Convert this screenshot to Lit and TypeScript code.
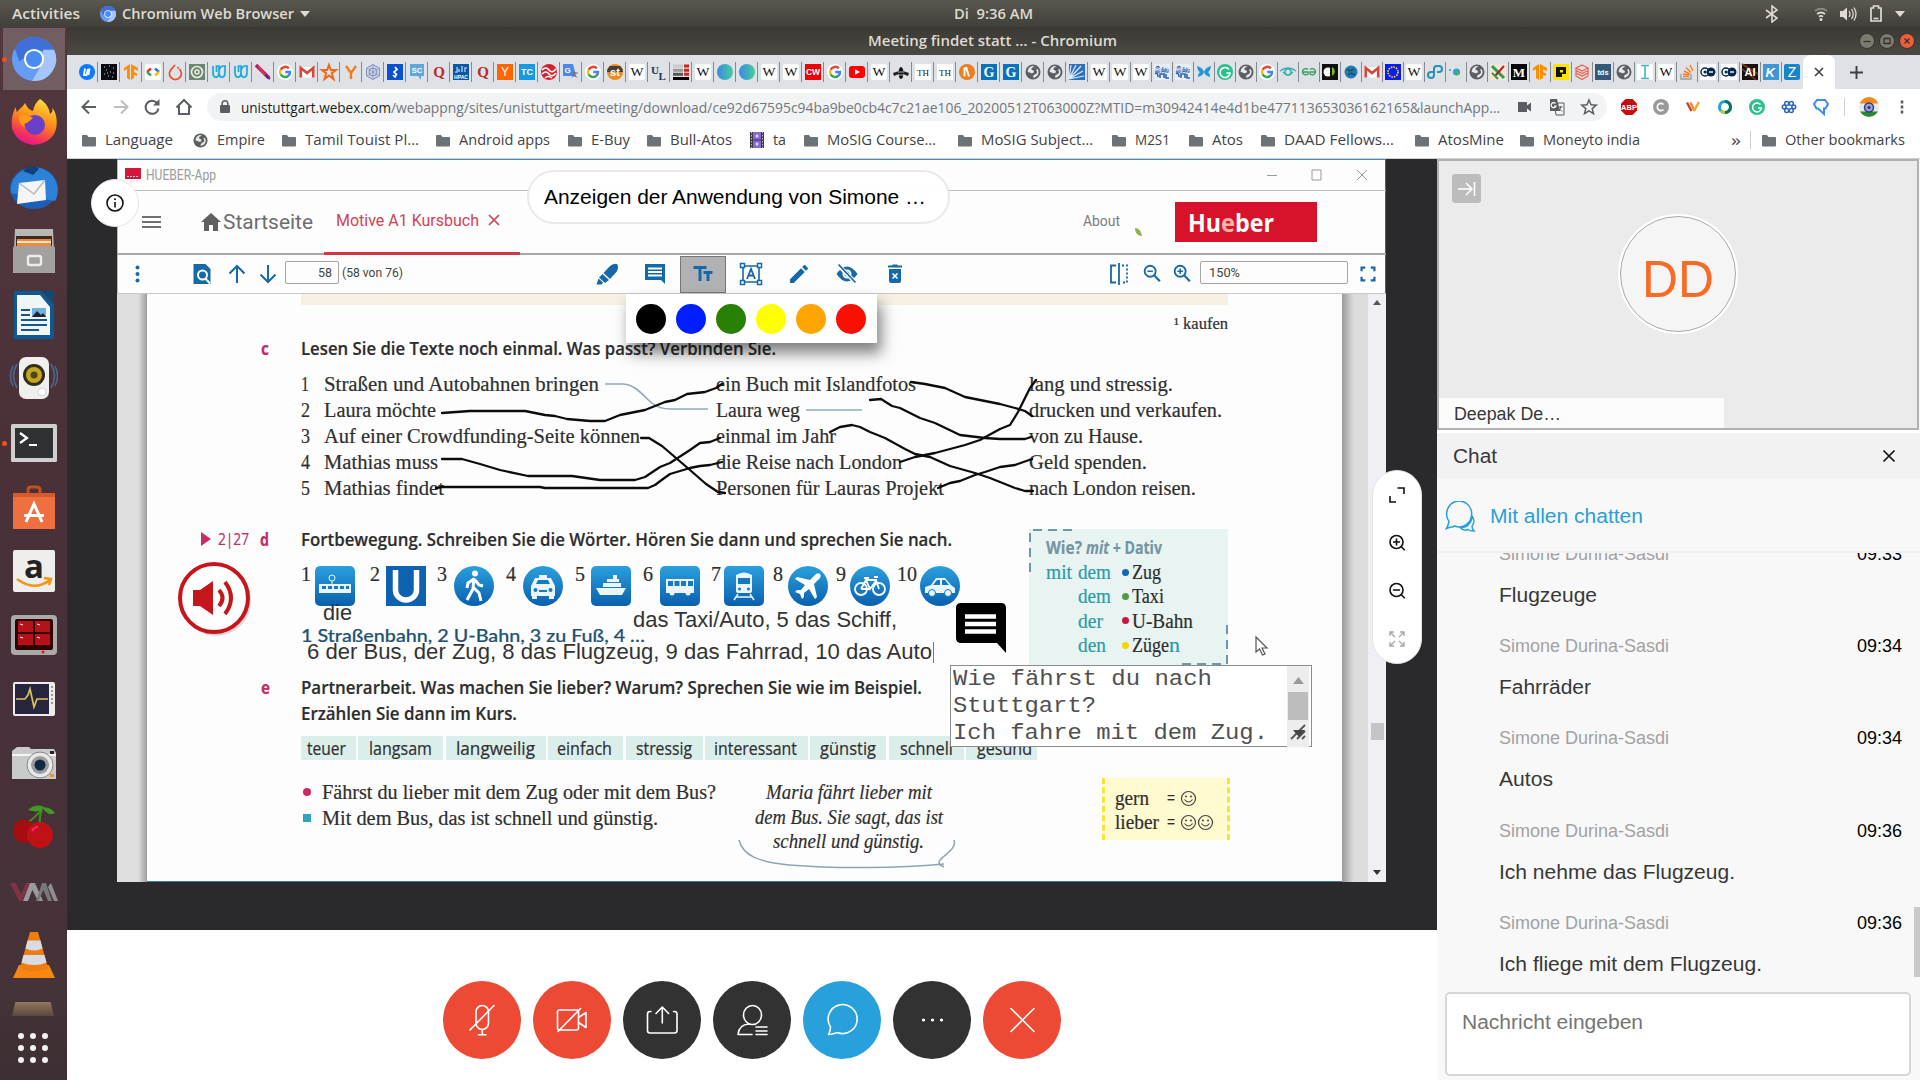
import { LitElement, html, svg, css } from "lit";
import { customElement, property } from "lit/decorators.js";

/* Text stretched horizontally to an exact width. */
@customElement("fit-text")
class FitText extends LitElement {
  @property({ type: Number }) w = 0;
  @property() text = "";
  static styles = css`
    :host { display: inline-block; flex: none; white-space: pre; }
    .in { display: inline-block; transform-origin: 0 50%; }
  `;
  updated() {
    const el = this.renderRoot.querySelector(".in") as HTMLElement;
    this.style.width = this.w + "px";
    el.style.transform = "none";
    const n = el.getBoundingClientRect().width;
    if (n) el.style.transform = `scaleX(${this.w / n})`;
  }
  render() { return html`<span class="in">${this.text}</span>`; }
}
void FitText;
const t = (text: string, w: number, cls = "") => html`<fit-text class=${cls} .w=${w} .text=${text}></fit-text>`;

const SANS = css`"Open Sans", "Noto Sans", sans-serif`;
const ARIAL = css`"Liberation Sans", Arial, sans-serif`;
const SERIF = css`"Liberation Serif", "Times New Roman", serif`;

/* ---------- shared glyphs ---------- */
const chromium = (s: number) => html`<svg width=${s} height=${s} viewBox="0 0 48 48">
  <circle cx="24" cy="24" r="24" fill="#659df5"/>
  <path d="M24 24L2.500 14A24 24 0 0 1 47 17.500L24 14z" fill="#3f6fd8"/>
  <path d="M24 0A24 24 0 0 1 46 14H24L8 27 3 12A24 24 0 0 1 24 0z" fill="#3f6fd8"/>
  <path d="M34 14h12A24 24 0 0 1 22 48L33 29z" fill="#a5c5fb"/>
  <circle cx="24" cy="24" r="11" fill="#fff"/><circle cx="24" cy="24" r="8.800" fill="#4a8af4"/></svg>`;

const globe = svg`<circle cx="8" cy="8" r="7.500" fill="#5b5f63"/><path d="M7 2C4 3 2.500 5.500 2.700 8c1.500 0 2.200.8 3.500 1.200C7.500 9.500 9 9 9 7.600S6.500 6.200 6.300 5 8.500 3.500 9.500 2.600zM12.500 5c-1.300.2-1.500 1.200-.8 2 .6.700.4 1.600-.2 2.400-.8 1-2 .9-2.700 1.700-.6.700-.9 1.800-.4 2.600C11 13.500 13.500 11 13.600 8c0-1.100-.4-2.200-1.100-3z" fill="#e6e8ea"/>`;
const tx = (s: string, fill: string, size = 12, font = "Liberation Sans", weight = "bold", y = 12.4, len = 0) =>
  len
    ? svg`<text x="8" y=${y} text-anchor="middle" font-family=${font} font-weight=${weight} font-size=${size} fill=${fill} textLength=${len} lengthAdjust="spacingAndGlyphs">${s}</text>`
    : svg`<text x="8" y=${y} text-anchor="middle" font-family=${font} font-weight=${weight} font-size=${size} fill=${fill}>${s}</text>`;
const sq = (fill: string, r = 0) => svg`<rect width="16" height="16" rx=${r} fill=${fill}/>`;
const wiki = svg`${sq("#fff", 2)}${tx("W", "#111", 13, "Liberation Serif", "normal", 12.4, 13)}`;
const goog = svg`<rect width="16" height="16" rx="8" fill="#fff"/><g fill="none" stroke-width="2.500"><path d="M11.800 4.400A5 5 0 0 0 3.600 5.800" stroke="#ea4335"/><path d="M3.600 5.800a5 5 0 0 0 0 4.500" stroke="#fbbc05"/><path d="M3.600 10.300a5 5 0 0 0 7.800 1.500" stroke="#34a853"/><path d="M11.400 11.800A5 5 0 0 0 13 8H8.200" stroke="#4285f4"/></g>`;
const gmail = svg`<path d="M1 3h14v10.500H1z" fill="#fff"/><path d="M1.800 13.500V4L8 9l6.200-5v9.500" fill="none" stroke="#d8453a" stroke-width="2.600"/>`;
const udac = svg`<path d="M2 2v6c0 7 6 7 6 0V2H5.500v6M8 8c0 7 6 7 6 0V2h-2.500C9 3 8 6 8 8" fill="none" stroke="#18a8da" stroke-width="1.700"/>`;
const tf = svg`<path d="M7 0v16l-3-2V5L1 7V4zM8 0l7 4v3L11 5v3l3 1.500V12l-3-1v3l-3 2z" fill="#ff8f00"/>`;
const quora = tx("Q", "#b92b27", 15, "Liberation Serif", "bold", 13);
const wcirc = svg`<defs><linearGradient id="gc"><stop offset="0" stop-color="#3b86e8"/><stop offset="1" stop-color="#46cf97"/></linearGradient></defs><circle cx="8" cy="8" r="8" fill="url(#gc)"/>`;
const gblue = svg`${sq("#0a72bd")}${tx("G", "#fff", 14, "Liberation Serif", "bold", 13)}`;
const tamil = svg`${sq("#e9eef6")}${tx("இந்து", "#2d64a8", 6.5, "Noto Sans", "bold", 7, 14)}<path d="M1 10c2-2 3 0 3 3M6 14v-4h4v4M12 10v4h3" stroke="#2d64a8" stroke-width="1.600" fill="none"/>`;
const dw = svg`${sq("#fff")}<circle cx="5" cy="8" r="4" fill="none" stroke="#05264e" stroke-width="1.500"/><circle cx="11" cy="8" r="4.500" fill="#05264e"/><circle cx="5" cy="8" r="1.500" fill="#05264e"/><path d="M9 8h4" stroke="#fff" stroke-width="1.400"/>`;

const favs = [
  svg`<circle cx="8" cy="8" r="8" fill="#0a7cff"/><path d="M6 4.500L5 11h2.500L9 5M10.500 4.500L9.500 11" stroke="#fff" stroke-width="1.800" fill="none"/>`,
  svg`${sq("#0a0c10")}<path d="M3 3h1M8 2h1M12 4h1M5 6h1M9 8h1M3 10h1M12 9h1M7 12h1M11 13h1M6 9h1" stroke="#bcd8e0" stroke-width="1.200"/>`,
  tf,
  svg`${sq("#fff", 2)}<path d="M6 4.500L2 8" stroke="#e33" stroke-width="2.500"/><path d="M2 8l4 3.500" stroke="#3a5" stroke-width="2.500"/><path d="M10 4.500l4 3.500" stroke="#27f" stroke-width="2.500"/><path d="M14 8l-4 3.500" stroke="#fb0" stroke-width="2.500"/>`,
  svg`<path d="M8 1L4.500 5a6 6 0 1 0 7.800 0" fill="none" stroke="#ee4c2c" stroke-width="1.700"/><circle cx="11" cy="3.800" r="1" fill="#ee4c2c"/>`,
  svg`${sq("#6f8570")}<circle cx="8" cy="8" r="5.500" fill="none" stroke="#e8eee6" stroke-width="1.700"/><circle cx="8" cy="8" r="2" fill="none" stroke="#e8eee6" stroke-width="1.500"/>`,
  udac, udac,
  svg`<path d="M1 1l13 13" stroke="#b3127f" stroke-width="3.600"/><path d="M3 2l8 10" stroke="#e7462b" stroke-width="1.500"/><path d="M10 11l5 4" stroke="#5a2a83" stroke-width="2"/>`,
  goog, gmail,
  svg`<path d="M8 1l1.800 5H15l-4.200 3.200L12.500 15 8 11.500 3.500 15l1.700-5.800L1 6h5.200z" fill="none" stroke="#ea6a1b" stroke-width="2"/>`,
  svg`<path d="M3 2l5 7 5-7M8 9v6" fill="none" stroke="#f07d1a" stroke-width="2.400"/>`,
  svg`<path d="M8 .5l6.500 3.700v7.600L8 15.500 1.500 11.800V4.200z" fill="#ced6ea" stroke="#7e90b8"/><circle cx="8" cy="8" r="4" fill="none" stroke="#7e90b8"/><path d="M8 1v14M2 4l12 8M14 4L2 12" stroke="#7e90b8" stroke-width=".7"/>`,
  svg`${sq("#0b50cf")}<path d="M8 3l2 2.500L7 8l2.500 2.500L8 13l-2-2" stroke="#fff" stroke-width="1.700" fill="none"/>`,
  svg`<path d="M1 0h14v12h-3v4l-3-4H1z" fill="#5fa8dd"/>${tx("SC", "#fff", 7.5, "Liberation Sans", "bold", 8.5)}`,
  quora,
  svg`${sq("#0b57a3")}<path d="M2 8h2V3M6 8V5M9 8V2M12 8V4h2" stroke="#9ec9ef" stroke-width="1.500"/>${tx("HPAC", "#fff", 6, "Liberation Sans", "bold", 15, 14)}`,
  quora,
  svg`${sq("#ff6600")}${tx("Y", "#fff", 12, "Liberation Sans", "normal")}`,
  svg`${sq("#169be0")}${tx("TC", "#fff", 9, "Liberation Sans", "bold", 11)}`,
  svg`<circle cx="8" cy="8" r="8" fill="#d5202d"/><path d="M1 6q4-4 7 0t7-1M1 10q4-4 7 0t7-1M4 14q3-3 7 0" stroke="#fff" stroke-width="1.500" fill="none"/>`,
  svg`<rect x="5" y="4" width="11" height="12" fill="#dcdfe3"/><path d="M0 0h10l3 12H0z" fill="#4a87ee"/><text x="1.500" y="8.500" font-family="Liberation Sans" font-weight="bold" font-size="8" fill="#fff">G</text><path d="M9 9h6M12 8v1c0 2-2 4-3 4M10 10c1 2 3 3 4 3" stroke="#6b7075" fill="none"/>`,
  goog,
  svg`<circle cx="8" cy="8" r="8" fill="#f08b1d"/><path d="M0 8a8 8 0 0 1 3-6l10 0a8 8 0 0 1 3 6z" fill="#4b3c33"/>${tx("st", "#fff", 11)}`,
  wiki,
  svg`<text x="0" y="9.500" font-family="Liberation Serif" font-weight="bold" font-size="11" fill="#1e3557">U</text><text x="7.500" y="15.500" font-family="Liberation Serif" font-weight="bold" font-size="11" fill="#1e3557">L</text>`,
  svg`<path d="M0 2h10" stroke="#c9c9c9" stroke-width="3"/><path d="M0 6.300h10" stroke="#9b9b9b" stroke-width="3"/><path d="M0 10.300h10" stroke="#555" stroke-width="3"/><path d="M0 14.500h16" stroke="#000" stroke-width="3"/><path d="M11 2h5M11 6.300h5M11 10.300h5" stroke="#c8281e" stroke-width="3"/>`,
  wiki, wcirc, wcirc, wiki, wiki,
  svg`${sq("#f00000")}${tx("CW", "#fff", 8.5, "Liberation Sans", "bold", 11.300)}`,
  goog,
  svg`<rect y="2" width="16" height="12" rx="3" fill="#f00"/><path d="M6 5.300v5.400L11 8z" fill="#fff"/>`,
  wiki,
  svg`<ellipse cx="8" cy="9" rx="2.500" ry="6" fill="#111"/><path d="M6 7L0 9l1 3 5-2zM10 7l6 2-1 3-5-2z" fill="#222"/><path d="M5 8h6M5 11h6" stroke="#ddd" stroke-width=".8"/>`,
  svg`${sq("#fff")}${tx("TH", "#111", 9, "Liberation Serif", "normal", 11.500)}`,
  svg`${sq("#fff")}${tx("TH", "#111", 9, "Liberation Serif", "normal", 11.500)}`,
  svg`<circle cx="8" cy="8" r="8" fill="#ee7d1e"/><path d="M5.500 3.500v9M7 3l3 9.500" stroke="#fff" stroke-width="2"/>`,
  gblue, gblue, globe, globe,
  svg`${sq("#2f6fc2")}<path d="M0 15L15 12M0 15L14 7M0 15L12 2M0 15L7 1M0 15L2 1" stroke="#dcebfb" stroke-width="1.200"/>`,
  wiki, wiki, wiki, tamil, tamil,
  svg`<path d="M8 8C6 3 3 3 1 2c1 5 2 6 4 6-2 0-3 2-3 5 3-1 5-2 6-5 1 3 3 4 6 5 0-3-1-5-3-5 2 0 3-1 4-6-2 1-5 1-7 6z" fill="#2196d3"/>`,
  svg`<circle cx="8" cy="8" r="8" fill="#2ec08b"/><path d="M12 5.500A5 5 0 1 0 13 9H9.500" fill="none" stroke="#fff" stroke-width="1.600"/>`,
  globe, goog,
  svg`<path d="M0 7q8-6 16 0M3 8q5 6 10 0" stroke="#37aeb0" fill="none" stroke-width="1.400"/><circle cx="8" cy="8" r="3" fill="none" stroke="#37aeb0" stroke-width="1.500"/>`,
  svg`<path d="M7 5.500A3.200 3.200 0 1 0 7 10V8H1M9 5.500A3.200 3.200 0 1 1 9 10V8h6" fill="none" stroke="#3a9d5d" stroke-width="1.300"/>`,
  svg`${sq("#111")}<circle cx="6" cy="8" r="4.500" fill="#fff"/><path d="M8 4a4 4 0 0 1 0 8z" fill="#111"/><path d="M10 3a5 5 0 0 1 0 9z" fill="#7db928"/>`,
  svg`<circle cx="8" cy="8" r="6.500" fill="#2679ad"/><path d="M4 5l3 2 4-2M5 11l3-2 4 2" stroke="#174a6b" fill="none" stroke-width="1.500"/>`,
  gmail,
  svg`${sq("#0a1cf0")}<circle cx="8" cy="8" r="5" fill="none" stroke="#ffe600" stroke-width="1.700" stroke-dasharray="1.500 1.100"/>`,
  wiki,
  svg`<g fill="none" stroke="#2c8fb5" stroke-width="2"><path d="M6 8H4a3 3 0 1 0 3 3V5a3 3 0 0 1 3-3h2a3 3 0 1 1 0 6h-2"/></g>`,
  svg`<circle cx="8.500" cy="8" r="3.500" fill="#2ba6c4"/><circle cx="10" cy="9" r="1.800" fill="#56b04a"/><circle cx="2" cy="6" r="1" fill="#2ba6c4"/>`,
  globe,
  svg`${sq("#f3e6d2")}<path d="M2 2l12 12" stroke="#2d9d4b" stroke-width="3"/><path d="M14 2L5 12" stroke="#b5222b" stroke-width="2"/><path d="M2 9l6 6" stroke="#2d9d4b" stroke-width="2"/>`,
  svg`${sq("#050505")}${tx("M", "#fff", 13, "Liberation Serif", "bold", 12.600)}`,
  tf,
  svg`${sq("#ffe500")}<path d="M3 3h10v7H9v3H3z" fill="#111"/><path d="M7 6h3v2.500H7z" fill="#ffe500"/>`,
  svg`<path d="M8 1l6 3-6 3-6-3zM2 6.500l6 3 6-3M2 9l6 3 6-3M2 4v8l6 3.500 6-3.500V4" fill="none" stroke="#f0604a" stroke-width="1.200"/>`,
  svg`${sq("#355876")}${tx("tds", "#fff", 7.5, "Liberation Sans", "bold", 10.500)}`,
  globe,
  svg`${sq("#fff")}<path d="M4 1.500h8M8 1.500v13M4 14.500h8" stroke="#45b7bb" stroke-width="1.600"/>`,
  wiki,
  svg`<path d="M2 10v5h10v-5" fill="none" stroke="#9b9da0" stroke-width="1.400"/><path d="M4 12.500h6M4 10l6 1M5 7l6 3M7 3.500l5 5M11 1l3 6" stroke="#f48024" stroke-width="1.400"/>`,
  dw, dw,
  svg`${sq("#17120f")}<path d="M0 0l16 10M0 5l14 11" stroke="#8c3a10" stroke-width="1.500"/>${tx("AI", "#fff", 11, "Liberation Sans", "bold", 12)}`,
  svg`${sq("#4096d6")}<text x="2.500" y="13" font-family="Liberation Sans" font-weight="bold" font-style="italic" font-size="13" fill="#fff">K</text>`,
  svg`${sq("#1785c8", 2)}${tx("Z", "#fff", 14, "Liberation Sans", "normal", 13)}`,
];

const bookmarks: [string, string, number, number][] = [
  ["f", "Language", 68, 111], ["g", "Empire", 48, 89], ["f", "Tamil Touist Pl…", 114, 154], ["f", "Android apps", 91, 132],
  ["f", "E-Buy", 39, 79], ["f", "Bull-Atos", 62, 103], ["v", "ta", 13, 54], ["f", "MoSIG Course…", 109, 154], ["f", "MoSIG Subject…", 112, 154],
  ["f", "M2S1", 35, 77], ["f", "Atos", 31, 72], ["f", "DAAD Fellows…", 110, 154], ["f", "AtosMine", 66, 105], ["f", "Moneyto india", 97, 150],
];
const bmIcon = (k: string) => k === "f"
  ? html`<svg width="14" height="13" viewBox="0 0 14 13"><path d="M0 2a1 1 0 0 1 1-1h4l1.500 2H13a1 1 0 0 1 1 1v7.500a1 1 0 0 1-1 1H1a1 1 0 0 1-1-1z" fill="#6d7276"/></svg>`
  : k === "g" ? html`<svg width="15" height="15" viewBox="0 0 16 16">${globe}</svg>`
  : html`<svg width="14" height="16" viewBox="0 0 14 16"><rect width="14" height="16" fill="#3d3b46"/><rect x="3" width="8" height="7.500" fill="#8768d9"/><rect x="3" y="8.500" width="8" height="7.500" fill="#8768d9"/><path d="M1.500 0v16M12.500 0v16" stroke="#bbb" stroke-width="1" stroke-dasharray="1.500 1.500"/><circle cx="7" cy="4" r="1.500" fill="#e3d9ff"/><circle cx="7" cy="12" r="1.500" fill="#e3d9ff"/></svg>`;

@customElement("browser-chrome")
class BrowserChrome extends LitElement {
  static styles = css`
    :host { display: block; font-family: ${SANS}; }
    svg { display: block; flex: none; overflow: visible; }
    .title { height: 28px; background: linear-gradient(#3a3935, #4b4942); color: #dfdbd2; display: grid; grid-template-columns: 801px 1fr auto; align-items: center; font: 600 14.5px/28px ${SANS}; }
    .wb { display: flex; gap: 4px; padding-right: 5px; }
    .tabs { height: 34px; background: #dee1e6; display: flex; padding-left: 9px; }
    .tab { width: 22px; box-sizing: border-box; display: flex; align-items: center; padding: 0 0 0 3px; background: linear-gradient(#878a8f, #878a8f) right center/1px 20px no-repeat; }
    .tab.n { width: 21px; padding-left: 2px; }
    .tab.last { background: none; }
    .act { width: 32px; background: #fff; border-radius: 8px 8px 0 0; display: grid; place-items: center; }
    .plus { padding-left: 15px; display: grid; place-items: center; }
    .bar { height: 36px; background: #fff; display: flex; align-items: center; }
    .nav { display: flex; justify-content: space-between; padding: 0 12px 0 11px; box-sizing: border-box; width: 140px; }
    .url { width: 1400px; height: 28px; border-radius: 14px; background: #f1f3f4; display: flex; align-items: center; font-size: 15px; line-height: 28px; color: #72767b; box-sizing: border-box; padding-left: 12px; }
    .url .host { color: #1c1e21; margin-left: 10px; }
    .acts { display: flex; margin-left: 16px; gap: 14px; }
    .ext { display: flex; gap: 14px; padding-left: 13px; align-items: center; }
    .sep { width: 1px; height: 18px; background: #cfd1d4; }
    .bm { height: 33px; background: #fff; display: flex; align-items: center; padding: 0 0 3px 15px; font-size: 14.5px; line-height: 24px; color: #3f4347; border-bottom: 1px solid #cfcfcf; box-sizing: content-box; height: 30px; }
    .item { display: flex; align-items: center; gap: 9px; flex: none; }
    .item fit-text { display: block; }
    .more { font-size: 17px; }
    .s2 { margin: 0 11px 0 9px; }
    .gap { width: 61px; flex: none; }
  `;
  render() {
    const s = "#5a5e63";
    return html`
      <div class="title"><span></span><span>${t("Meeting findet statt … - Chromium", 249)}</span>
        <div class="wb">
          <svg width="16" height="16" viewBox="0 0 16 16"><circle cx="8" cy="8" r="7.500" fill="#7d7a70" stroke="#33322e"/><path d="M4.500 8.500h7" stroke="#33322e" stroke-width="1.300"/></svg>
          <svg width="16" height="16" viewBox="0 0 16 16"><circle cx="8" cy="8" r="7.500" fill="#7d7a70" stroke="#33322e"/><path d="M5 5.500h6v5H5z" fill="none" stroke="#33322e" stroke-width="1.300"/></svg>
          <svg width="16" height="16" viewBox="0 0 16 16"><circle cx="8" cy="8" r="7.500" fill="#ee5f37" stroke="#33322e"/><path d="M5.500 5.500l5 5M10.500 5.500l-5 5" stroke="#33322e" stroke-width="1.300"/></svg>
        </div></div>
      <div class="tabs">${favs.map((f, i) => html`<div class="tab ${i > 46 ? "n" : ""} ${i === favs.length - 1 ? "last" : ""}"><svg width="16" height="16" viewBox="0 0 16 16">${f}</svg></div>`)}
        <div class="act"><svg width="10" height="10" viewBox="0 0 10 10"><path d="M1 1l8 8M9 1l-8 8" stroke="#3c4043" stroke-width="1.600"/></svg></div>
        <div class="plus"><svg width="13" height="13" viewBox="0 0 13 13"><path d="M6.500 0v13M0 6.500h13" stroke="#3c4043" stroke-width="1.900"/></svg></div></div>
      <div class="bar">
        <div class="nav">
          <svg width="22" height="18" viewBox="0 0 22 18"><path d="M18 9H5M11 2.500L4.500 9l6.500 6.500" fill="none" stroke=${s} stroke-width="2"/></svg>
          <svg width="22" height="18" viewBox="0 0 22 18"><path d="M4 9h13M11 2.500L17.500 9 11 15.500" fill="none" stroke="#bcbec1" stroke-width="2"/></svg>
          <svg width="22" height="18" viewBox="0 0 22 18"><path d="M16 5A6.500 6.500 0 1 0 17.500 10.500" fill="none" stroke=${s} stroke-width="2"/><path d="M18.500 1v6.500H12z" fill=${s}/></svg>
          <svg width="22" height="18" viewBox="0 0 22 18"><path d="M3.500 9.500L11 2l7.500 7.500M6 8v8h10V8" fill="none" stroke=${s} stroke-width="2"/></svg>
        </div>
        <div class="url"><svg width="12" height="14" viewBox="0 0 12 14"><rect x="1" y="5" width="10" height="8" rx="1" fill=${s}/><path d="M3.200 5.500V3.500a2.800 2.800 0 0 1 5.600 0v2" fill="none" stroke=${s} stroke-width="1.500"/></svg>
          ${t("unistuttgart.webex.com", 150, "host")}${t("/webappng/sites/unistuttgart/meeting/download/ce92d67595c94ba9be0cb4c7c21ae106_20200512T063000Z?MTID=m30942414e4d1be477113653036162165&launchApp…", 1109)}
          <div class="acts">
            <svg width="18" height="18" viewBox="0 0 18 18"><path d="M2 4h9v3.500L15 4.500v9L11 10.500V14H2z" fill=${s}/></svg>
            <svg width="18" height="18" viewBox="0 0 18 18"><path d="M6 5h10v12H8z" fill="none" stroke=${s}/><path d="M2 1h7l3 12H2z" fill=${s}/><path d="M7.500 5.500A2.500 2.500 0 1 0 8 8H6" stroke="#fff" fill="none" stroke-width="1.200"/><path d="M10.500 9h4M12.500 8v1c0 2-1 3-2 4M11 10.500l3 3" stroke=${s} fill="none"/></svg>
            <svg width="18" height="18" viewBox="0 0 18 18"><path d="M9 2l2 4.800 5.200.4-4 3.400 1.300 5L9 12.900l-4.500 2.700 1.300-5-4-3.400 5.200-.4z" fill="none" stroke=${s} stroke-width="1.500"/></svg>
          </div></div>
        <div class="ext">
          <svg width="18" height="18" viewBox="0 0 18 18"><path d="M5.500 1h7L17 5.500v7L12.500 17h-7L1 12.500v-7z" fill="#c70d0d"/><text x="9" y="11.800" text-anchor="middle" font-family="Liberation Sans" font-weight="bold" font-size="7.500" fill="#fff">ABP</text></svg>
          <svg width="18" height="18" viewBox="0 0 18 18"><circle cx="9" cy="9" r="8" fill="#999"/><path d="M11.500 6.500a3.600 3.600 0 1 0 0 5" fill="none" stroke="#fff" stroke-width="1.600"/></svg>
          <svg width="18" height="18" viewBox="0 0 18 18"><path d="M3 4.500l4.500 8.500" stroke="#d23c2a" stroke-width="2.400"/><path d="M6.500 4.500l4 8.500" stroke="#f0861f" stroke-width="2.200"/><path d="M15 4l-5 9" stroke="#f5a623" stroke-width="2.400"/></svg>
          <svg width="18" height="18" viewBox="0 0 18 18"><circle cx="9" cy="9" r="5.500" fill="#fff" stroke="#1fa1dc" stroke-width="3"/><path d="M9 3.500a5.500 5.500 0 0 1 0 11" fill="none" stroke="#136e57" stroke-width="3"/><path d="M9 14.500a5.500 5.500 0 0 1-4-2" fill="none" stroke="#a6cf3a" stroke-width="3"/></svg>
          <svg width="18" height="18" viewBox="0 0 18 18"><circle cx="9" cy="9" r="8" fill="#2ec08b"/><path d="M12.500 6.500A4.500 4.500 0 1 0 13.500 10H10" fill="none" stroke="#fff" stroke-width="1.500"/></svg>
          <svg width="18" height="18" viewBox="0 0 18 18"><g fill="none" stroke="#2a65c0" stroke-width="1.500"><circle cx="6.700" cy="5.500" r="2"/><circle cx="11.300" cy="5.500" r="2"/><circle cx="4.200" cy="9" r="1.900"/><circle cx="13.800" cy="9" r="1.900"/><circle cx="6.700" cy="12.500" r="2"/><circle cx="11.300" cy="12.500" r="2"/></g></svg>
          <svg width="18" height="18" viewBox="0 0 18 18"><path d="M5 2h8l3 4-2.500 4.500H12V16L6 10.500H4.500L2 6z" fill="none" stroke="#3b8df0" stroke-width="2"/></svg>
          <div class="sep"></div>
          <svg width="20" height="20" viewBox="0 0 20 20"><clipPath id="av"><circle cx="10" cy="10" r="10"/></clipPath><g clip-path="url(#av)"><rect width="20" height="20" fill="#e8e9ee"/><rect width="20" height="6.500" fill="#f58a1c"/><rect y="14.500" width="20" height="6" fill="#2b8a2b"/></g><circle cx="10" cy="10.500" r="4.500" fill="#9aa2c8" stroke="#2d3f8f" stroke-width="1.500"/><circle cx="10" cy="10.500" r="1.500" fill="#26337a"/></svg>
          <svg width="18" height="18" viewBox="0 0 18 18"><path d="M9 2.500v3M9 7.500v3M9 12.500v3" stroke=${s} stroke-width="2.600"/></svg>
        </div></div>
      <div class="bm">${bookmarks.map(([k, n, w, full]) => html`<div class="item" style="width:${full}px">${bmIcon(k)}${t(n, w)}</div>`)}
        <span class="gap"></span>${t("»", 10, "more")}<div class="sep s2"></div>
        <div class="item">${bmIcon("f")}${t("Other bookmarks", 120)}</div></div>`;
  }
}
void BrowserChrome;

/* ---------- dock ---------- */
const dock = [
  chromium(44),
  html`<svg width="46" height="48" viewBox="0 0 46 48"><defs><linearGradient id="ff" x1=".7" y1="0" x2=".3" y2="1"><stop offset="0" stop-color="#ffe03a"/><stop offset=".45" stop-color="#ff8a16"/><stop offset=".8" stop-color="#f5305a"/><stop offset="1" stop-color="#e3149a"/></linearGradient></defs><path d="M29 0c7 5 9 9 10 15 3-2 3-5 2-7 6 8 6 20 2 27A23 22 0 0 1 1 29C0 20 2 12 5 8c0 2 0 4 1 5 3-4 6-5 8-9 2 4 4 7 8 8 1-5 3-9 7-12z" fill="url(#ff)"/><circle cx="24" cy="26" r="10" fill="#6a3fc9"/><path d="M8 17c6-2 10 0 14 2l-6 5c-3 0-4 1-2 4-4-1-7-6-6-11z" fill="#ff9a1a"/></svg>`,
  html`<svg width="50" height="48" viewBox="0 0 50 48"><ellipse cx="25" cy="25" rx="24" ry="21" fill="#1c5fb5"/><path d="M2 30C0 12 18 0 34 6c14 6 18 22 12 32" fill="#2c82d8"/><path d="M14 8c4-5 12-6 16-2l-6 6z" fill="#10407e"/><path d="M10 20l26-3 1 20-29 4z" fill="#f4f5f6"/><path d="M10 20l15 11 11-14" fill="none" stroke="#b5b9c0" stroke-width="1.500"/></svg>`,
  html`<svg width="44" height="46" viewBox="0 0 44 46"><path d="M3 1h38l2 44H1z" fill="#b9b7b3"/><path d="M4 8h36v14H4z" fill="#3b2a1f"/><path d="M5 11h34v10H5z" fill="#ef8a3a"/><path d="M5 14h34" stroke="#fff" stroke-width="1.500"/><rect x="1" y="18" width="42" height="27" rx="2" fill="#a2a19f"/><rect x="16" y="28" width="13" height="9" rx="2" fill="none" stroke="#ececea" stroke-width="2.400"/></svg>`,
  html`<svg width="42" height="48" viewBox="0 0 42 48"><path d="M1 0h27l13 13v35H1z" fill="#0c5a92"/><path d="M4 4h23l10 12v28H4z" fill="#f3f4f5"/><path d="M28 0h13v11z" fill="#0a4b7c"/><path d="M8 19h9M8 24h9M8 29h26M8 34h26M8 39h18" stroke="#14588e" stroke-width="2"/><rect x="19" y="17" width="14" height="9" fill="#6fb0e0"/><path d="M19 26l5-6 4 4 2-2 3 4z" fill="#223"/></svg>`,
  html`<svg width="50" height="46" viewBox="0 0 50 46"><g fill="none" stroke="#4d6a92" stroke-width="1.500"><path d="M8 8q-7 12 0 24M4 10q-5 10 0 20M42 8q7 12 0 24M46 10q5 10 0 20"/></g><rect x="10" y="1" width="30" height="42" rx="7" fill="#efefed"/><circle cx="25" cy="19" r="11" fill="#2f2d20"/><circle cx="25" cy="19" r="8" fill="#c4a51d"/><circle cx="25" cy="19" r="3.500" fill="#4d4618"/><circle cx="33" cy="36" r="4" fill="#fff" stroke="#d3d3d0"/></svg>`,
  html`<svg width="46" height="38" viewBox="0 0 46 38"><rect width="46" height="38" rx="1.500" fill="#cfcfcf"/><rect x="4" y="4" width="38" height="30" fill="#2f3232"/><path d="M9 9l7 5-7 5M18 21h8" fill="none" stroke="#fff" stroke-width="2.200"/></svg>`,
  html`<svg width="42" height="46" viewBox="0 0 42 46"><path d="M15 13V6q0-3 3-3h6q3 0 3 3v7" fill="none" stroke="#c4501e" stroke-width="3"/><path d="M0 9h42v36H0z" fill="#ee7040"/><path d="M0 9h42v4H0z" fill="#d85a2b"/><path d="M13 38l8-18 8 18M11 31.500h20" fill="none" stroke="#fff" stroke-width="3"/></svg>`,
  html`<svg width="42" height="42" viewBox="0 0 42 42"><rect width="42" height="42" rx="2" fill="#eeeeed"/><text x="21" y="28" text-anchor="middle" font-family="Open Sans" font-weight="bold" font-size="33" fill="#222">a</text><path d="M4 29q17 13 33 1M31 28l7 1-2 6" fill="none" stroke="#f79410" stroke-width="2.400"/></svg>`,
  html`<svg width="46" height="40" viewBox="0 0 46 40"><rect width="46" height="40" rx="4" fill="#a9aba8"/><rect x="4" y="4" width="38" height="31" rx="2" fill="#300"/><path d="M7 6h15v11H7zM24 6h15v11H24zM7 19h15v11H7zM24 19h15v11H24z" fill="#b5121a"/><path d="M9 9l3 1M26 9l3 1M9 22l3 1M26 22l3 1" stroke="#fff"/><circle cx="32" cy="37" r="1.500" fill="#e11"/></svg>`,
  html`<svg width="42" height="34" viewBox="0 0 42 34"><rect width="42" height="34" rx="2" fill="#ededeb"/><rect x="2" y="2" width="34" height="30" fill="#272440"/><path d="M3 17h9l3-4 2-6 4 18 3-8h11" fill="none" stroke="#d9c64e" stroke-width="1.700"/><path d="M39 4v20" stroke="#999" stroke-width="2" stroke-dasharray="2 2"/></svg>`,
  html`<svg width="44" height="36" viewBox="0 0 44 36"><path d="M5 2h12l2 2h23l2 4v26H0V6z" fill="#c9cbca"/><path d="M0 10h44" stroke="#f5f5f5" stroke-width="2"/><circle cx="28" cy="20" r="13" fill="#e8e8e8" stroke="#888"/><circle cx="28" cy="20" r="9" fill="#9a9c9d"/><circle cx="28" cy="20" r="5.500" fill="#12283f"/><rect x="38" y="6" width="4" height="3" fill="#222"/><rect x="38" y="29" width="4" height="3" fill="#e9952d"/></svg>`,
  html`<svg width="44" height="46" viewBox="0 0 44 46"><path d="M14 20Q25 12 30 5M28 22Q27 12 30 5" fill="none" stroke="#3f8f1c" stroke-width="2"/><path d="M16 6q8-7 16-3-4 7-16 3zM30 3q9 0 13 6-7 4-13-6z" fill="#3f9a22"/><ellipse cx="12" cy="27" rx="11" ry="11.500" fill="#a50d10"/><ellipse cx="28" cy="31" rx="13" ry="13" fill="#c01216"/><path d="M20 27q2-4 6-4" stroke="#f27" stroke-width="2" fill="none"/></svg>`,
  html`<svg width="48" height="20" viewBox="0 0 48 16"><path d="M0 0h6l5 11L16 0h4l-8 18H9z" fill="#7f3347"/><path d="M20 0h5l-7 18h-5zM25 0l8 18h-5L22 6z" fill="#9b9b9f"/><path d="M32 0h4l-7 18h-3zM36 0l6 18h-4L33 6z" fill="#77777c"/><path d="M41 0l7 18h-4L38 4z" fill="#8f8f93"/></svg>`,
  html`<svg width="42" height="48" viewBox="0 0 42 48"><path d="M6 34h30l6 13H0z" fill="#f58712"/><path d="M17 1h8l10 36q-14 7-28 0z" fill="#f07c10"/><path d="M14.500 9.500h13l2 8q-8 4-17 0zM10.500 24h21l2 7.500q-12 5-25 0z" fill="#d7dbe2"/></svg>`,
];

@customElement("side-dock")
class SideDock extends LitElement {
  static styles = css`
    :host { display: block; width: 67px; height: 1053px; background: linear-gradient(#52373d, #4a3138 40%, #48303a 60%, #453338 90%, #3d2f33); }
    svg { display: block; overflow: visible; }
    .c { height: 64px; display: flex; align-items: center; justify-content: center; position: relative; }
    .c.on { background: linear-gradient(#725d62, #725d62) center/62px 62px no-repeat; }
    .dot { position: absolute; left: 2px; top: 30px; width: 5px; height: 5px; border-radius: 50%; background: #ea5422; }
    .box { height: 14px; width: 42px; margin: 15px 0 0 12px; background: linear-gradient(#91785f, #5a483e); clip-path: polygon(8% 0, 92% 0, 100% 100%, 0 100%); }
    .apps { display: grid; grid-template-columns: repeat(3, 6px); gap: 6px; justify-content: center; padding: 17px 2px 0 0; }
    .apps i { width: 6px; height: 6px; border-radius: 50%; background: #f3f1f1; }
  `;
  render() {
    return html`${dock.map((d, i) => html`<div class="c ${i === 0 ? "on" : ""}">${i === 0 || i === 6 ? html`<span class="dot"></span>` : ""}${d}</div>`)}
      <div class="box"></div><div class="apps">${Array.from({ length: 9 }, () => html`<i></i>`)}</div>`;
  }
}
void SideDock;

/* ---------- book window ---------- */
const defs = svg`<defs><linearGradient id="bl" x2="0" y2="1"><stop offset="0" stop-color="#2aa0dd"/><stop offset="1" stop-color="#0a5fae"/></linearGradient></defs>`;
const tile = svg`<rect width="40" height="40" rx="5" fill="url(#bl)"/>`;
const disc = svg`<circle cx="20" cy="20" r="20" fill="url(#bl)"/>`;
const W = "#eaf5fb";
const transport: [string, number, number, unknown][] = [
  ["1", 301, 315, svg`${tile}<path d="M4 18h32v9H4z" fill=${W}/><path d="M7 20h4v3H7zM13 20h4v3h-4zM19 20h4v3h-4zM25 20h4v3h-4zM31 20h3v3h-3z" fill="#1779c0"/><circle cx="17" cy="12" r="3" fill="none" stroke=${W}/><path d="M17 15v3" stroke=${W}/>`],
  ["2", 370, 386, svg`<rect width="40" height="40" fill="#0f62b0"/><path d="M9.500 4v20a10.500 10 0 0 0 21 0V4" fill="none" stroke="#fff" stroke-width="5.500"/>`],
  ["3", 437, 454, svg`${disc}<circle cx="21" cy="7.500" r="3" fill="#fff"/><path d="M20 12l-1 11-6 11M20 22l5 5 2 8M20 13l-6 4-1 5M21 14l4 5 4 1" fill="none" stroke="#fff" stroke-width="3"/>`],
  ["4", 506, 523, svg`${disc}<path d="M8 20l4-8h16l4 8v10H8z" fill=${W}/><path d="M13 18l2-4h10l2 4z" fill="#1779c0"/><path d="M16 9h8v3h-8zM9 30h5v3H9zM26 30h5v3h-5z" fill=${W}/><circle cx="12.500" cy="24" r="2" fill="#1779c0"/><circle cx="27.500" cy="24" r="2" fill="#1779c0"/><path d="M16 25h8" stroke="#1779c0" stroke-width="2"/>`],
  ["5", 575, 591, svg`${tile}<path d="M5 22h30l-4 7H9zM12 17h18v4H12zM16 13h12v3H16zM22 9h4v4h-4z" fill=${W}/>`],
  ["6", 643, 660, svg`${tile}<path d="M6 13h28v14H6z" fill=${W}/><path d="M8 15h5v5H8zM14.500 15h5v5h-5zM21 15h5v5h-5zM28 15h5v5h-5z" fill="#1779c0"/><circle cx="12" cy="27" r="2.500" fill=${W}/><circle cx="28" cy="27" r="2.500" fill=${W}/>`],
  ["7", 711, 724, svg`${tile}<path d="M12 9q8-5 16 0v16q0 2-2 2H14q-2 0-2-2z" fill=${W}/><path d="M14 12h12v6H14z" fill="#1779c0"/><circle cx="15.500" cy="23" r="1.500" fill="#1779c0"/><circle cx="24.500" cy="23" r="1.500" fill="#1779c0"/><path d="M14 28l-4 6M26 28l4 6M12 31h16" stroke=${W} stroke-width="1.500"/>`],
  ["8", 773, 788, svg`${disc}<path d="M32 8q-3-2-6 2l-4 4-13-3-2 2 10 6-4 5-4 0-2 2 5 2 2 5 2-2 0-4 5-4 6 10 2-2-3-13 4-4q4-3 2-6z" fill="#fff"/>`],
  ["9", 836, 850, svg`${disc}<g fill="none" stroke="#fff" stroke-width="1.800"><circle cx="11" cy="23" r="6"/><circle cx="29" cy="23" r="6"/><path d="M11 23l5-9h10l3 9M16 14l4 9 6-8M11 23h9M14 12h5M24 11h4"/></g>`],
  ["10", 897, 920, svg`${disc}<path d="M5 21l6-2 5-7h9l6 7 4 3v5H5z" fill=${W}/><path d="M13 19l4-5h3v5zM22 14h3l4 5h-7z" fill="#1779c0"/><circle cx="12" cy="27" r="3.500" fill=${W} stroke="#1779c0"/><circle cx="28" cy="27" r="3.500" fill=${W} stroke="#1779c0"/>`],
];
const rows: [string, number, string, number, string, number][] = [
  ["Straßen und Autobahnen bringen", 275, "ein Buch mit Islandfotos", 200, "lang und stressig.", 144],
  ["Laura möchte", 112, "Laura weg", 84, "drucken und verkaufen.", 193],
  ["Auf einer Crowdfunding-Seite können", 316, "einmal im Jahr", 120, "von zu Hause.", 114],
  ["Mathias muss", 114, "die Reise nach London", 186, "Geld spenden.", 118],
  ["Mathias findet", 120, "Personen für Lauras Projekt", 228, "nach London reisen.", 167],
];
const chips: [string, number, number, number][] = [
  ["teuer", 39, 55, 6], ["langsam", 63, 85, 11], ["langweilig", 79, 100, 10], ["einfach", 55, 75, 9], ["stressig", 56, 77, 10],
  ["interessant", 83, 103, 9], ["günstig", 56, 76, 10], ["schnell", 53, 75, 11], ["gesund", 55, 71, 11],
];
const strokes = [
  "442,413 470,411 525,411 545,415 555,416 567,419 590,421 605,421 620,415 645,410 665,402 675,400 687,394 705,392 716,388 722,384",
  "641,438 649,438 662,446 690,470 706,484 718,492 725,493",
  "442,459 462,459 480,464 500,470 528,476 572,476 600,480 635,480 645,477 660,467 670,463 690,450 700,443 710,442 720,438",
  "436,488 442,487 540,487 545,488 648,488 655,485 663,479 670,474 690,468 700,466 710,465 722,462",
  "911,382 925,384 945,388 965,397 980,400 1000,404 1015,408 1025,411 1032,416",
  "870,400 881,399 892,406 900,408 920,418 935,423 960,435 985,438 1000,439 1025,439 1031,437",
  "830,432 840,427 852,425 860,427 870,432 885,438 905,449 915,454 930,457 950,466 975,473 990,478 1015,488 1025,491 1033,491",
  "900,462 915,457 935,453 965,445 980,440 1000,429 1010,425 1018,412 1025,398 1030,388 1036,380",
  "938,488 950,483 960,481 975,475 985,472 1000,467 1015,465 1032,459",
];
const B = "#1668a6";
const smile = html`<svg class="sm" width="17" height="17" viewBox="0 0 17 17"><circle cx="8.500" cy="8.500" r="7" fill="none" stroke="#444" stroke-width="1.200"/><circle cx="6" cy="6.500" r="1" fill="#444"/><circle cx="11" cy="6.500" r="1" fill="#444"/><path d="M4.500 9.500q4 5 8 0" fill="none" stroke="#444" stroke-width="1.200"/></svg>`;

@customElement("book-window")
class BookWindow extends LitElement {
  static styles = css`
    :host { display: flex; flex-direction: column; position: relative; width: 1269px; height: 723px; background: #fdfdfd; box-sizing: border-box; font-family: ${SERIF}; color: #2f2f30; box-shadow: inset 0 1px #4b86b5, inset 1px 0 #9cc3d4, inset -1px 0 #3d5f92, inset 0 -1px #3c7b93; overflow: hidden; }
    svg { display: block; flex: none; overflow: visible; }
    .tb { height: 32px; display: flex; align-items: center; padding: 0 18px 0 8px; border-bottom: 1px solid #bdbdbd; box-sizing: border-box; font: 14px/24px Roboto, sans-serif; color: #9c9c9c; gap: 5px; }
    .tb .sp, .hd .sp, .tools .sp { flex: 1; }
    .ctl { display: flex; gap: 33px; }
    .hd { height: 64px; box-sizing: border-box; border-bottom: 2px solid #a8a8a8; display: flex; align-items: stretch; font-family: Roboto, sans-serif; }
    .hd > * { display: flex; align-items: center; }
    .burger { padding-left: 25px; }
    .start { padding-left: 40px; color: #6d6d6d; font-size: 20px; gap: 2px; }
    .book { margin: 0 0 -2px 11px; width: 196px; box-sizing: border-box; padding: 0 0 3px 12px; gap: 9px; color: #cf4356; font-size: 16px; border-bottom: 3px solid #d23746; }
    .about { color: #7b7b7b; font-size: 14px; padding-bottom: 2px; }
    .leaf { padding: 20px 32px 0 14px; }
    .logo { width: 142px; height: 40px; background: #d8122b; margin: 11px 69px 0 0; box-sizing: border-box; padding-left: 13px; color: #fff; font: 700 25px/40px ${SANS}; }
    .logo .e { color: #f7b3a5; }
    .tools { height: 39px; box-sizing: border-box; border-bottom: 1px solid #c9c9c9; display: flex; align-items: center; font: 13.5px/22px Roboto, sans-serif; color: #444; }
    .cnt { padding-bottom: 4px; }
    .inp { height: 23px; border: 1px solid #a5a5a5; border-radius: 2px; box-sizing: border-box; display: flex; align-items: center; }
    .p { width: 54px; justify-content: flex-end; padding-right: 6px; margin: 0 3px 4px 5px; }
    .z { width: 148px; padding-left: 8px; margin: 0 9px 4px 7px; }
    .tt { width: 46px; height: 37px; background: #b2b2b4; border: 1px solid #77777a; box-sizing: border-box; display: grid; place-items: center; }
    .body { flex: 1; display: flex; min-height: 0; }
    .lg { width: 30px; background: linear-gradient(90deg, #dfdfe0 70%, #9d9d9f); }
    .rg { width: 26px; background: linear-gradient(90deg, #9a9a9d, #dcdcdd 45%); }
    .sb { width: 18px; background: #f0eff3; display: flex; flex-direction: column; align-items: center; padding: 6px 0; box-sizing: border-box; }
    .thumb { width: 13px; height: 17px; background: #c5c5c8; margin: 418px 0 130px; flex: none; }
    .page { width: 1195px; overflow: hidden; font-size: 20px; line-height: 26px; -webkit-text-stroke: .2px; }
    .band { height: 11px; width: 927px; margin-left: 154px; background: #f6f1e2; }
    .kauf { display: flex; justify-content: flex-end; margin: 8px 114px 0 0; font-size: 16px; line-height: 22px; }
    .sec { display: grid; grid-template-columns: 154px 728px 199px; }
    .gut { display: flex; color: #bf2f68; font: 700 18px/26px ${SANS}; padding-left: 114px; box-sizing: border-box; }
    .hh { font: 600 18px/26px ${SANS}; color: #2d2d2e; display: block; }
    .row { display: grid; grid-template-columns: 23px 392px 313px 200px; height: 26px; }
    .row fit-text { display: block; }
    .list { margin-top: 10px; }
    .secd { margin-top: 25px; }
    .gd { padding-left: 54px; gap: 7px; align-items: center; height: 26px; }
    .gd .lt { margin-left: -3px; }
    .n27 { font-weight: 400; font-size: 17px; }
    .pics { display: flex; margin-top: 14px; height: 40px; position: relative; }
    .pic { display: flex; align-items: flex-start; }
    .pic span { line-height: 17px; box-sizing: border-box; }
    .hand { display: block; margin-top: 16px; font: 500 18px/26px Lato, "Open Sans", sans-serif; color: #1d5274; }
    .box { margin: 3px 0 0 0; height: 136px; background: #e8f4f2; padding: 7px 0 0 17px; box-sizing: border-box; line-height: 24.300px; }
    .box .h { font: 700 17px/24px ${SANS}; color: #7594a4; display: flex; }
    .bi { font-style: italic; }
    .br { display: grid; grid-template-columns: 32px 43px 11px 1fr; height: 24.300px; align-items: center; color: #2a9ba6; }
    .br i { width: 7px; height: 7px; border-radius: 50%; margin-left: 1px; }
    .br fit-text { display: block; }
    .dk { color: #2d2d2e; display: flex; }
    .tl { color: #2a9ba6; }
    .sece { margin-top: 9px; }
    .chips { display: flex; gap: 2.400px; margin-top: 10px; }
    .chip { height: 24px; background: #dceeeb; box-sizing: border-box; font: 500 17.500px/24px ${SANS}; white-space: nowrap; flex: none; }
    .dlg { display: grid; grid-template-columns: 454px 347px 128px; margin-top: 19px; }
    .dr { display: flex; align-items: center; height: 26px; }
    .dr b { width: 8px; height: 8px; background: #30a5bb; margin: 0 11px 0 2px; }
    .dr b.r { border-radius: 50%; background: #c52b62; }
    .it { font-style: italic; display: grid; grid-template-rows: repeat(3, 24.500px); }
    .yel { margin-top: -1px; height: 62px; box-sizing: border-box; background: #fffacf; border: 2px dashed #f5e53b; border-width: 0 3px; padding: 8px 0 0 10px; line-height: 24px; }
    .yr { display: grid; grid-template-columns: 52px 13px auto auto 1fr; height: 24px; align-items: center; }
    .over { position: absolute; left: 0; top: 0; width: 1269px; height: 723px; }
    .pal { position: absolute; left: 509px; top: 135px; width: 251px; height: 49px; background: #fff; box-shadow: 4px 10px 14px rgba(0,0,0,.5); display: flex; align-items: center; gap: 10px; padding-left: 10px; box-sizing: border-box; }
    .pal i { width: 30px; height: 30px; border-radius: 50%; }
    .note { position: absolute; left: 833px; top: 506px; width: 362px; height: 82px; background: #fff; border: 1px solid #8c8c8c; box-sizing: border-box; display: grid; grid-template-columns: 336px 22px; font: 22px/27px "Liberation Mono", monospace; color: #505050; }
    .note .l { padding-left: 2px; }
    .note fit-text { display: block; height: 27px; }
    .ns { background: #ededed; display: flex; flex-direction: column; align-items: center; padding: 11px 0 0; box-sizing: border-box; }
    .ns i { width: 20px; height: 28px; background: #bdbdbd; margin: 8px 0 3px; flex: none; }
  `;
  render() {
    const ic = (x: number, mr: number, body: unknown) => html`<svg width=${x} height="24" viewBox="0 0 24 24" style="margin-right:${mr}px">${body}</svg>`;
    return html`
      <div class="tb"><svg width="16" height="14" viewBox="0 0 16 14"><path d="M0 0h16v11H0z" fill="#d3173a"/><path d="M2 8.500h11M5 13h8" stroke="#f3c6cf" stroke-dasharray="2 1"/></svg>${t("HUEBER-App", 70)}<span class="sp"></span>
        <div class="ctl"><svg width="12" height="12" viewBox="0 0 12 12"><path d="M1 6.500h10" stroke="#999"/></svg><svg width="12" height="12" viewBox="0 0 12 12"><path d="M1 1h9v10H1z" fill="none" stroke="#999"/></svg><svg width="12" height="12" viewBox="0 0 12 12"><path d="M1 1l10 10M11 1L1 11" stroke="#999"/></svg></div></div>
      <div class="hd">
        <div class="burger"><svg width="19" height="14" viewBox="0 0 19 14"><path d="M0 2h19M0 7h19M0 12h19" stroke="#707070" stroke-width="2"/></svg></div>
        <div class="start"><svg width="20" height="18" viewBox="0 0 20 18"><path d="M10 0l10 9h-3v9h-5v-6H8v6H3V9H0z" fill="#606060"/></svg>${t("Startseite", 90)}</div>
        <div class="book">${t("Motive A1 Kursbuch", 143)}<svg width="12" height="12" viewBox="0 0 12 12"><path d="M1 1l10 10M11 1L1 11" stroke="#cf4356" stroke-width="1.700"/></svg></div>
        <span class="sp"></span><div class="about">${t("About", 37)}</div>
        <div class="leaf"><svg width="9" height="9" viewBox="0 0 9 9"><path d="M1 0c4 0 6 3 7 8C4 8 1 5 1 0z" fill="#8db548"/></svg></div>
        <div class="logo">${t("Hu", 33)}${t("e", 14, "e")}${t("ber", 39)}</div></div>
      <div class="tools">
        <svg width="8" height="18" viewBox="0 0 8 18" style="margin:0 48px 0 17px"><circle cx="3.500" cy="2.500" r="2" fill=${B}/><circle cx="3.500" cy="9" r="2" fill=${B}/><circle cx="3.500" cy="15.500" r="2" fill=${B}/></svg>
        ${ic(24, 11, svg`<path d="M3.500 2h12l5 5v15h-17z" fill=${B}/><circle cx="12.500" cy="13" r="4.500" fill="none" stroke="#fff" stroke-width="2"/><path d="M15.500 16.500l4.500 5" stroke="#fff" stroke-width="2"/>`)}
        ${ic(24, 7, svg`<path d="M12 21V4M4.500 11.500L12 4l7.500 7.500" fill="none" stroke=${B} stroke-width="2"/>`)}
        ${ic(24, 0, svg`<path d="M12 3v17M4.500 12.500L12 20l7.500-7.500" fill="none" stroke=${B} stroke-width="2"/>`)}
        <div class="inp p">${t("58", 14)}</div>${t("(58 von 76)", 61, "cnt")}<span style="width:192px"></span>
        ${ic(24, 24, svg`<path d="M14.500 4.500Q19 .5 22.500 2.500q1.500 4-1.500 8L15 17 8.500 11zM7.500 12l6.500 6-4 3-6-5.500zM3.500 16.500l4.500 4-1.500 2H1.500z" fill=${B}/>`)}
        ${ic(24, 13, svg`<path d="M2 2h20v20l-4-4H2z" fill=${B}/><path d="M5 6.500h14M5 10h14M5 13.500h14" stroke="#fff" stroke-width="1.800"/>`)}
        <div class="tt"><svg width="24" height="24" viewBox="0 0 24 24"><path d="M2.500 4v3h5v12h3V7h5V4zm19 5h-9v3h3v7h3v-7h3z" fill=${B}/></svg></div>
        <span style="width:13px"></span>
        ${ic(24, 24, svg`<path d="M4 4h16v16H4z" fill="none" stroke=${B} stroke-width="1.600"/><path d="M1.500 1.500h4v4h-4zM18.500 1.500h4v4h-4zM1.500 18.500h4v4h-4zM18.500 18.500h4v4h-4z" fill="#fff" stroke=${B} stroke-width="1.500"/><path d="M8 17l4-10 4 10M9.500 13.500h5" fill="none" stroke=${B} stroke-width="1.800"/>`)}
        ${ic(24, 24, svg`<path d="M3 17.250V21h3.750L17.800 9.940l-3.750-3.750zM20.700 7.040a1 1 0 0 0 0-1.410l-2.340-2.340a1 1 0 0 0-1.410 0l-1.830 1.830 3.750 3.750z" fill=${B}/>`)}
        ${ic(24, 24, svg`<path d="M1.500 12q10.500-15 21 0-10.500 15-21 0z" fill=${B}/><circle cx="12" cy="12" r="4.500" fill="#fff"/><circle cx="12" cy="12" r="2.500" fill=${B}/><path d="M3 3l18 18" stroke="#fff" stroke-width="4"/><path d="M3.500 2.500l17 18" stroke=${B} stroke-width="1.800"/>`)}
        ${ic(24, 0, svg`<path d="M6 7h12v12a2 2 0 0 1-2 2H8a2 2 0 0 1-2-2zM5 3.500h4l1-1h4l1 1h4v2H5z" fill=${B}/><path d="M9.500 11.500l5 5M14.500 11.500l-5 5" stroke="#fff" stroke-width="1.600"/>`)}
        <span class="sp"></span>
        ${ic(24, 10, svg`<path d="M12 1v22" stroke=${B} stroke-width="1.800"/><path d="M9 3.500H4v17h5" fill="none" stroke=${B} stroke-width="1.800"/><path d="M15 3.500h5v17h-5" fill="none" stroke=${B} stroke-width="1.800" stroke-dasharray="2 2"/>`)}
        ${ic(22, 8, svg`<circle cx="10" cy="9" r="6" fill="none" stroke=${B} stroke-width="2"/><path d="M14.500 13.500l6 6.500" stroke=${B} stroke-width="2.400"/><path d="M7 9h6" stroke=${B} stroke-width="1.600"/>`)}
        ${ic(22, 0, svg`<circle cx="10" cy="9" r="6" fill="none" stroke=${B} stroke-width="2"/><path d="M14.500 13.500l6 6.500" stroke=${B} stroke-width="2.400"/><path d="M7 9h6M10 6v6" stroke=${B} stroke-width="1.600"/>`)}
        <div class="inp z">${t("150%", 31)}</div>
        ${ic(22, 7, svg`<path d="M5 9V5h4M15 5h4v4M19 15v4h-4M9 19H5v-4" fill="none" stroke=${B} stroke-width="2.400"/>`)}
      </div>
      <div class="body"><div class="lg"></div>
        <div class="page"><div class="band"></div><div class="kauf">${t("¹ kaufen", 54)}</div>
          <div class="sec"><div class="gut">${t("c", 8)}</div><div>
            ${t("Lesen Sie die Texte noch einmal. Was passt? Verbinden Sie.", 475, "hh")}
            <div class="list">${rows.map((r, i) => html`<div class="row"><span>${t(String(i + 1), i ? 9 : 8)}</span>${t(r[0], r[1])}${t(r[2], r[3])}${t(r[4], r[5])}</div>`)}</div></div></div>
          <div class="sec secd"><div class="gut gd"><svg width="10" height="14" viewBox="0 0 10 14"><path d="M0 0l10 7-10 7z" fill="#c92c6a"/></svg>${t("2|27", 31, "n27")}<span></span>${t("d", 9, "lt")}</div>
            <div>${t("Fortbewegung. Schreiben Sie die Wörter. Hören Sie dann und sprechen Sie nach.", 651, "hh")}
              <div class="pics">${transport.map(([n, a, b, g], i) => html`<div class="pic"><span style="width:${b - a}px;margin-left:${i ? a - transport[i - 1][2] - 40 : 0}px">${n}</span><svg width="40" height="40" viewBox="0 0 40 40">${defs}${g}</svg></div>`)}</div>
              ${t("1 Straßenbahn, 2 U-Bahn, 3 zu Fuß, 4 …", 344, "hand")}</div>
            <div class="box"><div class="h">${t("Wie? ", 40)}${t("mit", 23, "bi")}${t(" + Dativ", 53)}</div>
              ${([["mit", "dem", 33, "Zug", 29, "#1268b0"], ["", "dem", 33, "Taxi", 32, "#4f9b4a"], ["", "der", 25, "U-Bahn", 61, "#c8173f"], ["", "den", 28, "Züge", 37, "#f3d20e"]] as [string, string, number, string, number, string][]).map((r) => html`<div class="br"><span>${r[0] ? t("mit", 26) : ""}</span>${t(r[1], r[2])}<i style="background:${r[5]}"></i><span class="dk">${t(r[3], r[4])}${r[3] === "Züge" ? t("n", 11, "tl") : ""}</span></div>`)}
            </div></div>
          <div class="sec sece"><div class="gut">${t("e", 9)}</div><div>
            ${t("Partnerarbeit. Was machen Sie lieber? Warum? Sprechen Sie wie im Beispiel.", 621, "hh")}${t("Erzählen Sie dann im Kurs.", 216, "hh")}
            <div class="chips">${chips.map((c) => html`<div class="chip" style="width:${c[2]}px;padding-left:${c[3]}px">${t(c[0], c[1])}</div>`)}</div>
            <div class="dlg"><div><div class="dr"><b class="r"></b>${t("Fährst du lieber mit dem Zug oder mit dem Bus?", 394)}</div><div class="dr"><b></b>${t("Mit dem Bus, das ist schnell und günstig.", 336)}</div></div>
              <div class="it"><div style="padding-left:11px">${t("Maria fährt lieber mit", 166)}</div><div>${t("dem Bus. Sie sagt, das ist", 188)}</div><div style="padding-left:18px">${t("schnell und günstig.", 151)}</div></div>
              <div class="yel"><div class="yr">${t("gern", 34)}${t("=", 8)}${smile}</div><div class="yr">${t("lieber", 44)}${t("=", 8)}${smile}${smile}</div></div></div>
          </div></div>
        </div>
        <div class="rg"></div>
        <div class="sb"><svg width="8" height="5" viewBox="0 0 8 5"><path d="M0 5l4-5 4 5z" fill="#555"/></svg><div class="thumb"></div><svg width="8" height="5" viewBox="0 0 8 5"><path d="M0 0l4 5 4-5z" fill="#333"/></svg></div>
      </div>
      <svg class="over" viewBox="117 159 1269 723">
        <path d="M605 384h17c14 0 22 13 30 19 6 5 12 6 18 6h38M806 410h56" fill="none" stroke="#8fabb8" stroke-width="1.600"/>
        <path d="M739 840c4 16 20 22 50 25 50 4 110 3 155-1M954 840c4 12-20 18-14 25l4 2" fill="none" stroke="#8fa4ae" stroke-width="1.500"/>
        ${strokes.map((p) => svg`<polyline points=${p} fill="none" stroke="#0c0c0c" stroke-width="2.300" stroke-linejoin="round" stroke-linecap="round"/>`)}
        <path d="M1030 572V530h46M1182 664h45v-42" fill="none" stroke="#6f97a6" stroke-width="2" stroke-dasharray="9 6"/>
        <circle cx="216" cy="601" r="35" fill="#999" opacity=".35"/><circle cx="214" cy="598" r="34" fill="#fff" stroke="#c4161c" stroke-width="4"/>
        <path d="M193 590h7l13-9v34l-13-9h-7z" fill="#c4161c"/><path d="M219 590q7 8 0 16M225 582q12 16 0 32" fill="none" stroke="#c4161c" stroke-width="4"/>
        <g font-family="Liberation Sans, Arial, sans-serif" font-size="21.500" fill="#333"><text x="323" y="620" textLength="29" lengthAdjust="spacingAndGlyphs">die</text><text x="633" y="627" textLength="264" lengthAdjust="spacingAndGlyphs">das Taxi/Auto, 5 das Schiff,</text><text x="307" y="659" textLength="625" lengthAdjust="spacingAndGlyphs">6 der Bus, der Zug, 8 das Flugzeug, 9 das Fahrrad, 10 das Auto</text></g>
        <path d="M933.500 642v21" stroke="#777"/>
        <path d="M961 603h40q5 0 5 5v45l-9-10h-36q-5 0-5-5v-30q0-5 5-5z" fill="#000"/><path d="M965 616.500h31M965 624h31M965 631.500h31" stroke="#fff" stroke-width="4.500"/>
        <path d="M1256 637v15l3.500-3 3 6 2.500-1-3-6h5z" fill="#fff" stroke="#555" stroke-width="1.200"/>
      </svg>
      <div class="pal">${["#000", "#001eff", "#288004", "#ffff00", "#ffa500", "#fa0f00"].map((c) => html`<i style="background:${c}"></i>`)}</div>
      <div class="note"><div class="l">${t("Wie fährst du nach", 259)}${t("Stuttgart?", 143)}${t("Ich fahre mit dem Zug.", 315)}</div>
        <div class="ns"><svg width="11" height="7" viewBox="0 0 11 7"><path d="M0 7l5.500-7L11 7z" fill="#9a9a9a"/></svg><i></i><svg width="18" height="18" viewBox="0 0 18 18"><path d="M2 16L16 2M8 16l8-8M13 16l3-3" stroke="#555" stroke-width="1.800"/><path d="M4 7h12l-6 7z" fill="#444"/></svg></div></div>`;
  }
}
void BookWindow;

/* ---------- chat column ---------- */
const messages: [string, string][] = [["09:33", "Flugzeuge"], ["09:34", "Fahrräder"], ["09:34", "Autos"], ["09:36", "Ich nehme das Flugzeug."], ["09:36", "Ich fliege mit dem Flugzeug."]];

@customElement("chat-panel")
class ChatPanel extends LitElement {
  static styles = css`
    :host { display: flex; flex-direction: column; width: 483px; height: 921px; background: #f8f8f8; font-family: ${ARIAL}; color: #373737; }
    svg { display: block; }
    .vid { height: 271px; box-sizing: border-box; border: 2px solid #b1b1b1; background: #ebebeb; position: relative; display: grid; place-items: start center; width: 482px; }
    .ava { width: 116px; height: 116px; border-radius: 50%; background: #f5f5f5; border: 1px solid #a9a9a9; box-sizing: border-box; box-shadow: 0 0 0 2px #fff; display: grid; place-items: center; color: #f66b26; font-size: 51px; line-height: 51px; padding-top: 10px; margin-top: 55px; }
    .col { position: absolute; left: 13px; top: 13px; width: 29px; height: 29px; border-radius: 3px; background: #bcbcbc; display: grid; place-items: center; }
    .name { position: absolute; left: 0; bottom: 0; width: 285px; height: 30px; background: #fcfcfc; font-size: 18px; line-height: 32px; padding-left: 15px; box-sizing: border-box; }
    .hd { border-top: 3px solid #fff; height: 45px; background: #f2f2f2; display: flex; justify-content: space-between; align-items: center; padding: 0 24px 0 16px; font-size: 20px; }
    .hd fit-text { padding-top: 2px; }
    .all { height: 73px; display: flex; align-items: center; gap: 14px; padding-left: 8px; font-size: 20px; color: #2aa0da; border-bottom: 2px solid #f0f0f0; box-sizing: border-box; padding-top: 3px; height: 75px; }
    .log { height: 435px; overflow: hidden; display: flex; flex-direction: column; justify-content: flex-end; position: relative; }
    .m { height: 92.200px; flex: none; padding: 0 18px 0 62px; box-sizing: border-box; position: relative; }
    .m:nth-last-child(2) { margin-bottom: -15px; }
    .top { display: flex; justify-content: space-between; color: #a2a2a2; font-size: 18px; line-height: 24px; }
    .top b { font-weight: 400; color: #000; }
    .msg { font-size: 20px; line-height: 26px; margin-top: 16px; }
    .th { position: absolute; right: 0; top: 354px; width: 6px; height: 70px; background: #cacaca; }
    .in { margin: 4px 9px 0 8px; height: 84px; box-sizing: border-box; border: 2px solid #d6d6d6; border-radius: 5px; background: #fff; color: #757575; font-size: 20px; padding: 15px 0 0 15px; line-height: 26px; }
  `;
  render() {
    const mw = [98, 92, 54, 236, 263];
    return html`
      <div class="vid"><div class="ava">${t("DD", 72)}</div>
        <div class="col"><svg width="19" height="16" viewBox="0 0 19 16"><path d="M1 8h13M9 2l6 6-6 6M17.500 1v14" fill="none" stroke="#fff" stroke-width="1.500"/></svg></div>
        <div class="name">${t("Deepak De…", 107)}</div></div>
      <div class="hd">${t("Chat", 44)}<svg width="14" height="14" viewBox="0 0 14 14"><path d="M1.500 1.500l11 11M12.500 1.500l-11 11" stroke="#111" stroke-width="1.700"/></svg></div>
      <div class="all"><svg width="31" height="31" viewBox="0 0 31 31"><path d="M4 20.500A12.500 13 0 1 1 9.500 25C7 26.500 4.500 26 1.500 27.500 3 25 3.500 23 4 20.500zM27 15c3 4 2 8 0 10 0 2 0 3 2 5-2 0-4 0-6-1.500-3 1.500-6 0-8-2 7 1 12-5 12-11.500z" fill="none" stroke="#2aa0da" stroke-width="1.500"/></svg>${t("Mit allen chatten", 153)}</div>
      <div class="log">${messages.map(([tm, m], i) => html`<div class="m"><div class="top"><span>${t("Simone Durina-Sasdi", 170)}</span><b>${tm}</b></div><div class="msg">${t(m, mw[i])}</div></div>`)}<div class="th"></div></div>
      <div class="in">${t("Nachricht eingeben", 181)}</div>`;
  }
}
void ChatPanel;

/* ---------- shell ---------- */
const g = (body: unknown) => html`<svg width="40" height="40" viewBox="0 0 40 40" fill="none" stroke="#fff" stroke-width="1.600" stroke-linecap="round" stroke-linejoin="round">${body}</svg>`;
const calls: [string, unknown][] = [
  ["r", g(svg`<rect x="14" y="5.500" width="12.500" height="24" rx="6.250"/><path d="M20.300 29.500v5M16.500 34.800h7.500M32 5.500L8 30"/>`)],
  ["r", g(svg`<rect x="5.500" y="10" width="21" height="20" rx="2"/><path d="M26.500 17.500l7.500-5v15l-7.500-5M28.500 8.500L6 31.500"/>`)],
  ["k", g(svg`<path d="M9 11.500H8a2.500 2.500 0 0 0-2.500 2.500v16.500A2.500 2.500 0 0 0 8 33h24.500a2.500 2.500 0 0 0 2.500-2.500V14a2.500 2.500 0 0 0-2.500-2.500h-1M20.300 23V7M14 13.500L20.300 7l6.300 6.500"/>`)],
  ["k", g(svg`<ellipse cx="20.500" cy="15" rx="9" ry="9.500"/><path d="M17 24c-7 .5-10.500 4-11 10.500h14M24 27h11M24 31h11M24 34.500h11"/>`)],
  ["b", g(svg`<path d="M8.500 27A14.500 14.500 0 1 1 16 32.800c-2.500-.5-5 1.700-9.500 1.700 1.800-2.500 2-4.500 2-7.500z"/>`)],
  ["k", g(svg`<circle cx="11.500" cy="20" r=".8" fill="#fff"/><circle cx="20.500" cy="20" r=".8" fill="#fff"/><circle cx="29.500" cy="20" r=".8" fill="#fff"/>`)],
  ["r", g(svg`<path d="M9 8.500l23 23M32 8.500l-23 23"/>`)],
];

@customElement("app-root")
class AppRoot extends LitElement {
  static styles = css`
    :host { display: block; width: 1920px; height: 1080px; overflow: hidden; background: #fff; font-family: ${SANS}; }
    svg { display: block; flex: none; }
    .gnome { height: 27px; background: linear-gradient(#5a574e, #403f3a); color: #dfdbd2; display: grid; grid-template-columns: 954px 1fr auto; align-items: center; font: 600 14.500px/27px ${SANS}; }
    .gl { display: flex; align-items: center; padding-left: 12px; gap: 6px; }
    .tray { display: flex; align-items: center; padding-right: 15px; }
    .mid { display: grid; grid-template-columns: 67px 1853px; }
    .work { display: grid; grid-template-columns: 1370px 483px; }
    .left { display: flex; flex-direction: column; }
    .stage { height: 771px; background: #2a292b; padding-left: 50px; box-sizing: border-box; position: relative; }
    .info { position: absolute; left: 24px; top: 20px; width: 48px; height: 48px; border-radius: 50%; background: #fff; display: grid; place-items: center; border: 1px solid #e5e5e5; box-sizing: border-box; }
    .pill { position: absolute; left: 460px; top: 11px; width: 423px; height: 54px; border-radius: 27px; border: 2px solid #e9e9ea; background: rgba(255,255,255,.97); box-sizing: border-box; padding-left: 15px; font: 20px/50px ${ARIAL}; color: #000; }
    .zoom { position: absolute; left: 1305px; top: 311px; width: 50px; height: 194px; border-radius: 25px; background: #fff; display: flex; flex-direction: column; align-items: center; justify-content: center; gap: 28px; border: 1px solid #e3e3e3; box-sizing: border-box; }
    .calls { height: 150px; display: flex; align-items: center; gap: 12px; padding: 30px 0 0 376px; box-sizing: border-box; }
    .cb { width: 78px; height: 78px; border-radius: 50%; display: grid; place-items: center; }
    .r { background: #ed4a35; } .k { background: #323232; } .b { background: #27a0dc; }
  `;
  render() {
    const c = "#dfdbd2";
    return html`
      <div class="gnome"><div class="gl">${t("Activities", 68)}<span style="width:8px"></span>${chromium(16)}${t("Chromium Web Browser", 172)}<svg width="10" height="6" viewBox="0 0 10 6"><path d="M0 0h10L5 6z" fill=${c}/></svg></div>
        <span>${t("Di  9:36 AM", 79)}</span>
        <div class="tray">
          <svg width="18" height="18" viewBox="0 0 18 18" style="margin-right:31px"><path d="M3 5l11 8-5 4V1l5 4L3 13" fill="none" stroke=${c} stroke-width="1.600"/></svg>
          <svg width="18" height="16" viewBox="0 0 18 16" style="margin-right:9px"><path d="M3 5q6-4.500 12 0" fill="none" stroke="#8b887f" stroke-width="1.800"/><path d="M5 8q4-3 8 0M7 10.700q2-1.500 4 0" fill="none" stroke=${c} stroke-width="1.800"/><circle cx="9" cy="13.500" r="1.500" fill=${c}/></svg>
          <svg width="18" height="16" viewBox="0 0 18 16" style="margin-right:12px"><path d="M1 5h3l4-3.500v13L4 11H1z" fill=${c}/><path d="M10 5q2 3 0 6M12.500 3q3.500 5 0 10M15 1.500q4 6.500 0 13" fill="none" stroke=${c} stroke-width="1.300"/></svg>
          <svg width="14" height="17" viewBox="0 0 14 17" style="margin-right:12px"><path d="M2 3h2.500V1h5v2H12v13H2z" fill="none" stroke=${c} stroke-width="1.700"/><path d="M4.500 13.500h5" stroke=${c} stroke-width="1.700"/></svg>
          <svg width="10" height="6" viewBox="0 0 10 6"><path d="M0 0h10L5 6z" fill=${c}/></svg></div></div>
      <div class="mid"><side-dock></side-dock>
        <div><browser-chrome></browser-chrome>
          <div class="work"><div class="left">
            <div class="stage"><book-window></book-window>
              <div class="info"><svg width="20" height="20" viewBox="0 0 20 20"><circle cx="10" cy="10" r="8" fill="none" stroke="#111" stroke-width="1.600"/><path d="M10 9v5.500" stroke="#111" stroke-width="1.600"/><circle cx="10" cy="6.300" r="1" fill="#111"/></svg></div>
              <div class="pill">${t("Anzeigen der Anwendung von Simone …", 382)}</div>
              <div class="zoom">
                <svg width="20" height="20" viewBox="0 0 20 20"><path d="M10.500 3H17v6M3 11v6h6" fill="none" stroke="#111" stroke-width="1.600"/></svg>
                <svg width="20" height="20" viewBox="0 0 20 20"><circle cx="9.500" cy="9" r="6.500" fill="none" stroke="#111" stroke-width="1.600"/><path d="M14.300 13.800l3.500 3.500M6 9h7M9.500 5.500v7" stroke="#111" stroke-width="1.600"/></svg>
                <svg width="20" height="20" viewBox="0 0 20 20"><circle cx="9.500" cy="9" r="6.500" fill="none" stroke="#111" stroke-width="1.600"/><path d="M14.300 13.800l3.500 3.500M6 9h7" stroke="#111" stroke-width="1.600"/></svg>
                <svg width="20" height="20" viewBox="0 0 20 20"><path d="M8 8L3 3M3 7V3h4M12 8l5-5M13 3h4v4M8 12l-5 5M3 13v4h4M12 12l5 5M17 13v4h-4" fill="none" stroke="#a9a9a9" stroke-width="1.400"/></svg>
              </div></div>
            <div class="calls">${calls.map(([k, i]) => html`<div class="cb ${k}">${i}</div>`)}</div></div>
            <chat-panel></chat-panel></div></div></div>`;
  }
}
void AppRoot;
